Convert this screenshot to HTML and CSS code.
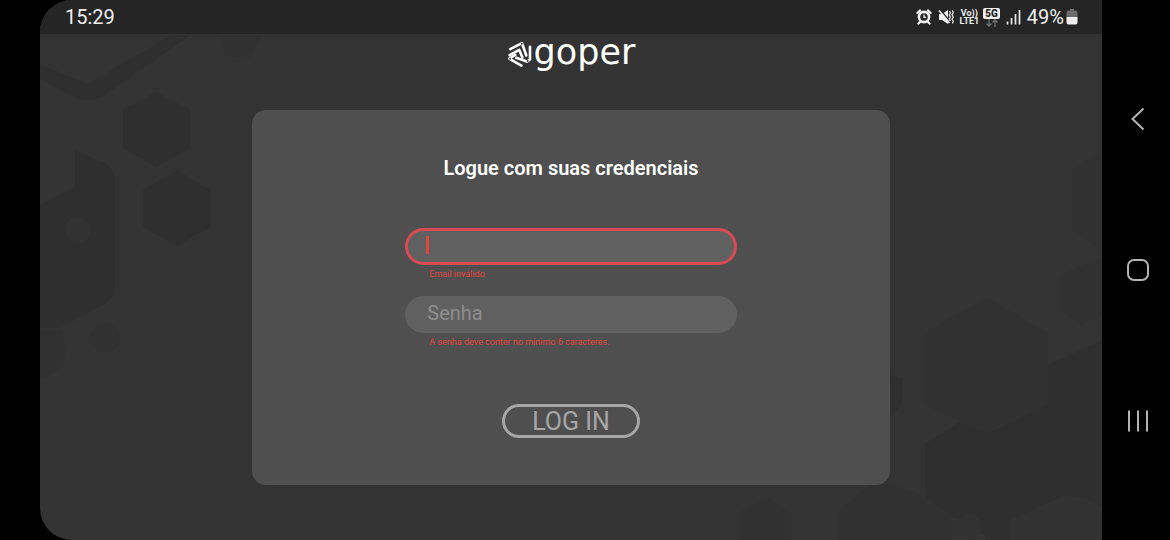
FILE: index.html
```
<!DOCTYPE html>
<html lang="pt-BR">
<head>
    <meta charset="UTF-8">
    <meta name="viewport" content="width=device-width, initial-scale=1.0">
    <title>Goper - Login</title>
    <link rel="stylesheet" href="styles.css">
</head>
<body>
    <div class="screen">
        <svg class="pattern" viewBox="0 0 1062 540" preserveAspectRatio="xMidYMid slice" aria-hidden="true">
            <g fill="#2f2f2f">
                <path d="M0 64 L47 84 L130 36 L152 34 L62 97 Q46 104 30 95 L0 79Z"/>
                <path d="M116 92 L150 110 V148 L116 167 L83 148 V110Z"/>
                <path d="M137 170 L170 190 V227 L137 246 L103 227 V190Z"/>
                <path d="M0 205 L35 187 V150 L68 165 L75 174 V294 L65 304 L20 328 H0Z"/>
                <path d="M885 444 L920 422 L948 433 L1008 405 V365 L1062 340 V540 H952 L885 500Z"/>
                <path d="M850 375 L862 378 V405 L850 416Z"/>
            </g>
            <g fill="#313131">
                <circle cx="65" cy="338" r="15"/>
                <path d="M0 330 H22 L26 350 L20 370 L0 380Z"/>
                <path d="M180 34 H222 L210 58 L186 56Z"/>
                <path d="M947 298 L1008 333 V405 L947 432 L884 405 V333Z"/>
                <path d="M725 496 L750 512 V540 H701 V512Z"/>
                <path d="M835 480 L870 490 L912 514 V540 H798 V512Z"/>
                <path d="M1062 152 L1032 170 V230 L1062 250Z"/>
                <path d="M1062 258 L1020 275 V310 L1040 325 L1062 315Z"/>
            </g>
            <g fill="#323232">
                <circle cx="38" cy="230" r="13"/>
                <circle cx="929" cy="527" r="13"/>
                <path d="M970 540 V520 L1025 495 L1050 500 L1062 508 V540Z"/>
            </g>
        </svg>

        <header class="status-bar">
            <time class="clock">15:29</time>
            <div class="status-icons">
                <svg width="16" height="16" viewBox="0 0 16 16" aria-label="Alarme">
                    <circle cx="8" cy="8" r="6.4" fill="#f0f0f0"/>
                    <path d="M1.5 4 L4 1.5 M14.5 4 L12 1.5 M4 13 L2.5 14.5 M12 13 L13.5 14.5" stroke="#f0f0f0" stroke-width="2.4" stroke-linecap="round"/>
                    <circle cx="8" cy="8" r="3.8" fill="#252525"/>
                    <path d="M8 5.5 V8.3 H10.2" stroke="#f0f0f0" stroke-width="1.3" fill="none"/>
                </svg>
                <svg width="16" height="16" viewBox="0 0 16 16" aria-label="Vibrar">
                    <path d="M1 5 H4 L10 1 V15 L4 11 H1Z" fill="#f0f0f0"/>
                    <path d="M2 .5 L12.5 13" stroke="#252525" stroke-width="1.3"/>
                    <path d="M1 1.5 L11.5 14" stroke="#f0f0f0" stroke-width="1.6"/>
                    <path d="M11.5 2 L12.5 4 L11.2 6 L12.5 8 L11.2 10 L12.5 12 M14.3 1.5 L15.3 3.5 L14 5.8 L15.3 8 L14 10.3 L15.3 12.5 L14.3 14.5" fill="none" stroke="#e4e4e4" stroke-width="1.3"/>
                </svg>
                <span class="volte"><span>Vo))</span><span>LTE1</span></span>
                <span class="network">
                    <span class="network-tag">5G</span>
                    <svg width="14" height="8" viewBox="0 0 14 8" aria-hidden="true">
                        <path d="M4 0 V7 M1.5 4.5 L4 7 L6.5 4.5 M10 8 V1 M7.5 3.5 L10 1 L12.5 3.5" fill="none" stroke="#717171" stroke-width="1.3"/>
                    </svg>
                </span>
                <svg width="15" height="16" viewBox="0 0 15 16" aria-label="Sinal">
                    <path d="M1.5 12.5 V15.5 M5.5 9 V15.5 M9.5 5 V15.5 M13.5 1 V15.5" stroke="#e8e8e8" stroke-width="1.7"/>
                </svg>
                <span class="battery-level">49%</span>
                <svg width="12" height="16" viewBox="0 0 12 16" aria-label="Bateria">
                    <path d="M4 0 H8 V1.5 H9.5 Q11.5 1.5 11.5 3.5 V8 H.5 V3.5 Q.5 1.5 2.5 1.5 H4Z" fill="#6a6a6a"/>
                    <path d="M.5 8 H11.5 V13.5 Q11.5 15.5 9.5 15.5 H2.5 Q.5 15.5 .5 13.5Z" fill="#f0f0f0"/>
                </svg>
            </div>
        </header>

        <main class="content">
            <div class="logo">
                <svg width="25" height="28" viewBox="0 0 25 28" aria-hidden="true">
                    <g fill="none" stroke="#fff" stroke-width="2.6" stroke-linecap="round" stroke-linejoin="round">
                        <path d="M3.2 9.2 L15 3.2 L19.3 15.5"/>
                        <path d="M2.6 15.2 L12.2 9.8 L15.4 17.6"/>
                        <path d="M23 6.8 V19.5 L20 21.6 L9.2 17.8"/>
                        <path d="M8.2 14.8 L2.2 18.6 L14.4 25.6"/>
                    </g>
                    <g fill="#333">
                        <circle cx="14.8" cy="3.8" r="1"/>
                        <circle cx="20.6" cy="21" r="1"/>
                        <circle cx="3" cy="18.8" r="1"/>
                    </g>
                </svg>
                <span class="logo-name">goper</span>
            </div>

            <form class="card">
                <h1>Logue com suas credenciais</h1>
                <div class="fields">
                    <div class="field">
                        <input class="invalid" type="email" aria-label="Email" aria-describedby="email-error">
                        <span class="caret"></span>
                        <p class="error" id="email-error">Email inválido</p>
                    </div>
                    <div class="field">
                        <input type="password" placeholder="Senha" aria-label="Senha" aria-describedby="password-error">
                        <p class="error" id="password-error">A senha deve conter no mínimo 6 caracteres.</p>
                    </div>
                </div>
                <button class="btn" type="button">LOG IN</button>
            </form>
        </main>
    </div>

    <nav class="system-nav">
        <button type="button" aria-label="Voltar">
            <svg width="24" height="24" viewBox="0 0 24 24"><path d="M17.5 1.5 L6.5 12 L17.5 22.5"/></svg>
        </button>
        <button type="button" aria-label="Início">
            <svg width="24" height="24" viewBox="0 0 24 24"><rect x="2" y="2" width="20" height="20" rx="6"/></svg>
        </button>
        <button type="button" aria-label="Recentes">
            <svg width="24" height="24" viewBox="0 0 24 24"><path d="M3 1.5 V22.5 M12 1.5 V22.5 M21 1.5 V22.5"/></svg>
        </button>
    </nav>
</body>
</html>
```
FILE: styles.css
```
:root {
    --background: #333333;
    --card: #4f4f4f;
    --field: #606060;
    --muted: #a6a6a6;
    --danger: #d94a55;
    --error-text: #e0463c;
}

* {
    box-sizing: border-box;
    margin: 0;
    padding: 0;
}

body {
    display: flex;
    min-height: 100vh;
    padding-left: 40px;
    background: #000;
    color: #fff;
    font-family: Roboto, sans-serif;
}

.screen {
    position: relative;
    flex: 1;
    display: flex;
    flex-direction: column;
    background: var(--background);
    border-radius: 32px 0 0 32px;
    overflow: hidden;
}

.pattern {
    position: absolute;
    inset: 0;
    width: 100%;
    height: 100%;
}

.status-bar {
    position: relative;
    display: flex;
    justify-content: space-between;
    align-items: center;
    height: 34px;
    padding: 0 24px 0 25px;
    background: #252525;
    color: #efefef;
    font-size: 20px;
}

.status-icons {
    display: flex;
    align-items: center;
    gap: 6px;
}

.volte {
    display: flex;
    flex-direction: column;
    align-items: center;
    font-size: 9px;
    font-weight: 700;
    line-height: 8px;
}

.network {
    display: flex;
    flex-direction: column;
    align-items: center;
    margin-left: -2px;
}

.network-tag {
    padding: 0 2px;
    border-radius: 2px;
    background: #f0f0f0;
    color: #222;
    font-size: 10px;
    font-weight: 900;
    line-height: 11px;
}

.battery-level {
    margin-right: -4px;
}

.content {
    position: relative;
    display: flex;
    flex-direction: column;
    align-items: center;
}

.logo {
    display: flex;
    align-items: center;
    gap: 2px;
    height: 40px;
    margin-bottom: 36px;
}

.logo-name {
    font-family: "DejaVu Sans", sans-serif;
    font-size: 35px;
    line-height: 36px;
    padding-bottom: 4px;
}

.card {
    display: flex;
    flex-direction: column;
    align-items: center;
    width: 60%;
    padding: 46px 0 47px;
    background: var(--card);
    border-radius: 14px;
}

h1 {
    font-size: 20px;
    font-weight: 600;
    line-height: 24px;
}

.fields {
    display: flex;
    flex-direction: column;
    gap: 16px;
    width: 52%;
    margin: 48px 0 56px;
}

.field {
    position: relative;
}

.field input {
    display: block;
    width: 100%;
    height: 37px;
    padding: 0 22px 4px;
    border: none;
    border-radius: 19px;
    outline: none;
    background: var(--field);
    color: #fff;
    font-family: inherit;
    font-size: 20px;
}

.field input.invalid {
    border: 3px solid var(--danger);
}

.field input::placeholder {
    color: #8e8e8e;
}

.caret {
    position: absolute;
    top: 8px;
    left: 21px;
    width: 3px;
    height: 18px;
    background: var(--error-text);
}

.error {
    padding: 4px 0 0 24px;
    color: var(--error-text);
    font-size: 9px;
    line-height: 11px;
}

.btn {
    height: 34px;
    padding: 1px 27px 0;
    border: 3px solid var(--muted);
    border-radius: 17px;
    background: transparent;
    color: var(--muted);
    font-family: inherit;
    font-size: 25px;
    line-height: 27px;
}

.system-nav {
    display: flex;
    flex-direction: column;
    justify-content: space-around;
    align-items: center;
    width: 68px;
    padding: 43px 0;
}

.system-nav button {
    display: flex;
    margin-left: 3px;
    border: none;
    background: none;
}

.system-nav svg {
    fill: none;
    stroke: #b4b4b4;
    stroke-width: 2;
}
```
